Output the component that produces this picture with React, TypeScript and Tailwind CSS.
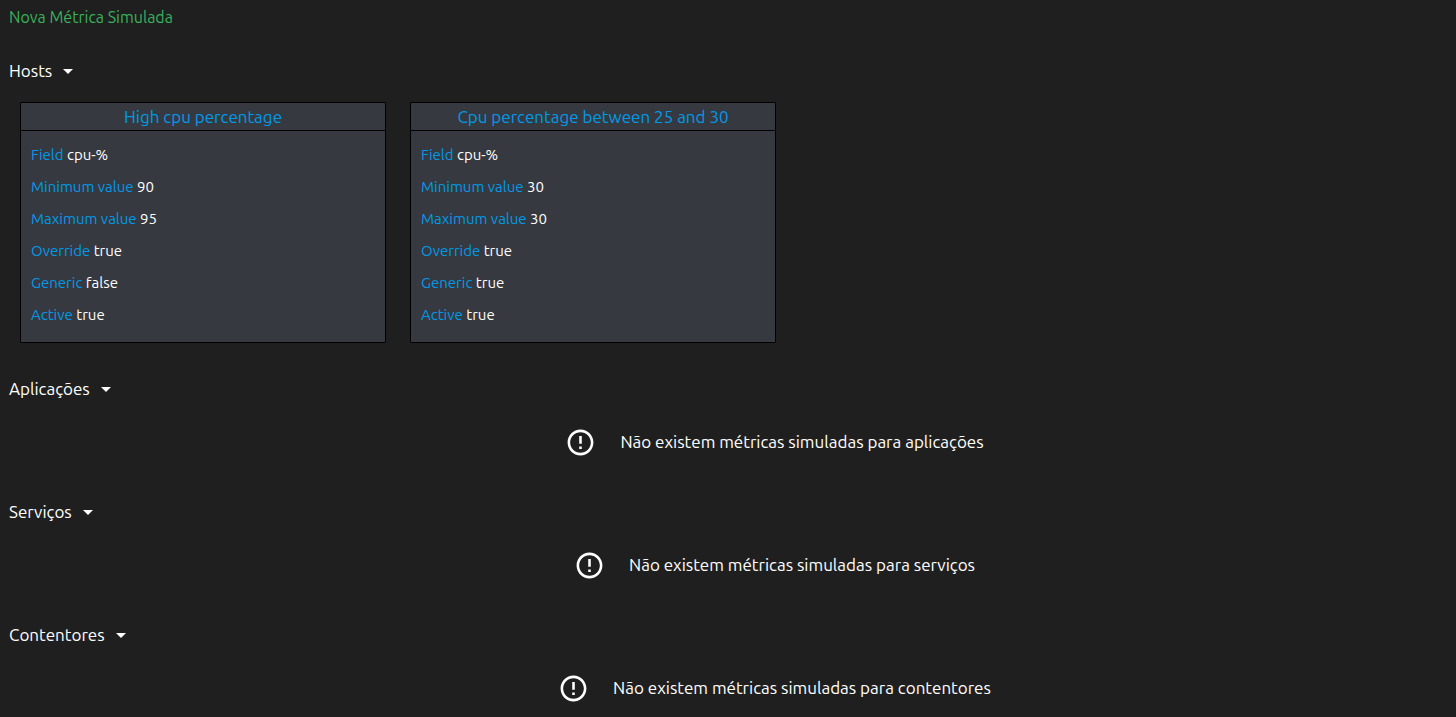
import { useState, type ReactNode } from "react";
import { MdArrowDropDown, MdErrorOutline } from "react-icons/md";

type Metric = {
  name: string;
  field: string;
  minimum: number;
  maximum: number;
  override: boolean;
  generic: boolean;
  active: boolean;
};

const hostMetrics: Metric[] = [
  { name: "High cpu percentage", field: "cpu-%", minimum: 90, maximum: 95, override: true, generic: false, active: true },
  { name: "Cpu percentage between 25 and 30", field: "cpu-%", minimum: 30, maximum: 30, override: true, generic: true, active: true },
];

function Property({ label, value }: { label: string; value: string | number | boolean }) {
  return (
    <div className="leading-8">
      <dt className="inline text-[#0099e8]">{label}</dt> <dd className="inline text-white">{String(value)}</dd>
    </div>
  );
}

function MetricCard({ metric }: { metric: Metric }) {
  return (
    <article className="w-full max-w-[366px] rounded-[1px] border border-black bg-[#36393f]">
      <h2 className="border-b border-black text-center text-[17px] leading-[27px]">
        <a href="#metric" className="text-[#0099e8]">{metric.name}</a>
      </h2>
      <dl className="px-2.5 pt-2 pb-[11px] text-[15px]">
        <Property label="Field" value={metric.field} />
        <Property label="Minimum value" value={metric.minimum} />
        <Property label="Maximum value" value={metric.maximum} />
        <Property label="Override" value={metric.override} />
        <Property label="Generic" value={metric.generic} />
        <Property label="Active" value={metric.active} />
      </dl>
    </article>
  );
}

function Section({ title, children }: { title: string; children: ReactNode }) {
  const [open, setOpen] = useState(true);
  return (
    <section>
      <button
        type="button"
        aria-expanded={open}
        onClick={() => setOpen(!open)}
        className="flex cursor-pointer items-center gap-1 text-[17px] leading-6"
      >
        {title}
        <MdArrowDropDown size={24} />
      </button>
      {open && children}
    </section>
  );
}

function EmptyMessage({ text }: { text: string }) {
  return (
    <div className="mt-[25px] mb-[42px] flex h-8 items-center justify-center gap-6 pl-[84px] text-[17px]">
      <MdErrorOutline size={31} className="shrink-0" />
      <p>{text}</p>
    </div>
  );
}

export default function App() {
  return (
    <main className="min-h-screen bg-[#1f1f1f] pt-[5px] pl-[9px] font-['Ubuntu','Noto_Sans',sans-serif] text-white">
      <button type="button" className="mb-[30px] block cursor-pointer text-[16px] leading-6 text-[#37b15c]">
        Nova Métrica Simulada
      </button>
      <Section title="Hosts">
        <div className="mt-[19px] mb-[34px] flex gap-6 pl-[11px]">
          {hostMetrics.map((metric) => (
            <MetricCard key={metric.name} metric={metric} />
          ))}
        </div>
      </Section>
      <Section title="Aplicações">
        <EmptyMessage text="Não existem métricas simuladas para aplicações" />
      </Section>
      <Section title="Serviços">
        <EmptyMessage text="Não existem métricas simuladas para serviços" />
      </Section>
      <Section title="Contentores">
        <EmptyMessage text="Não existem métricas simuladas para contentores" />
      </Section>
    </main>
  );
}
